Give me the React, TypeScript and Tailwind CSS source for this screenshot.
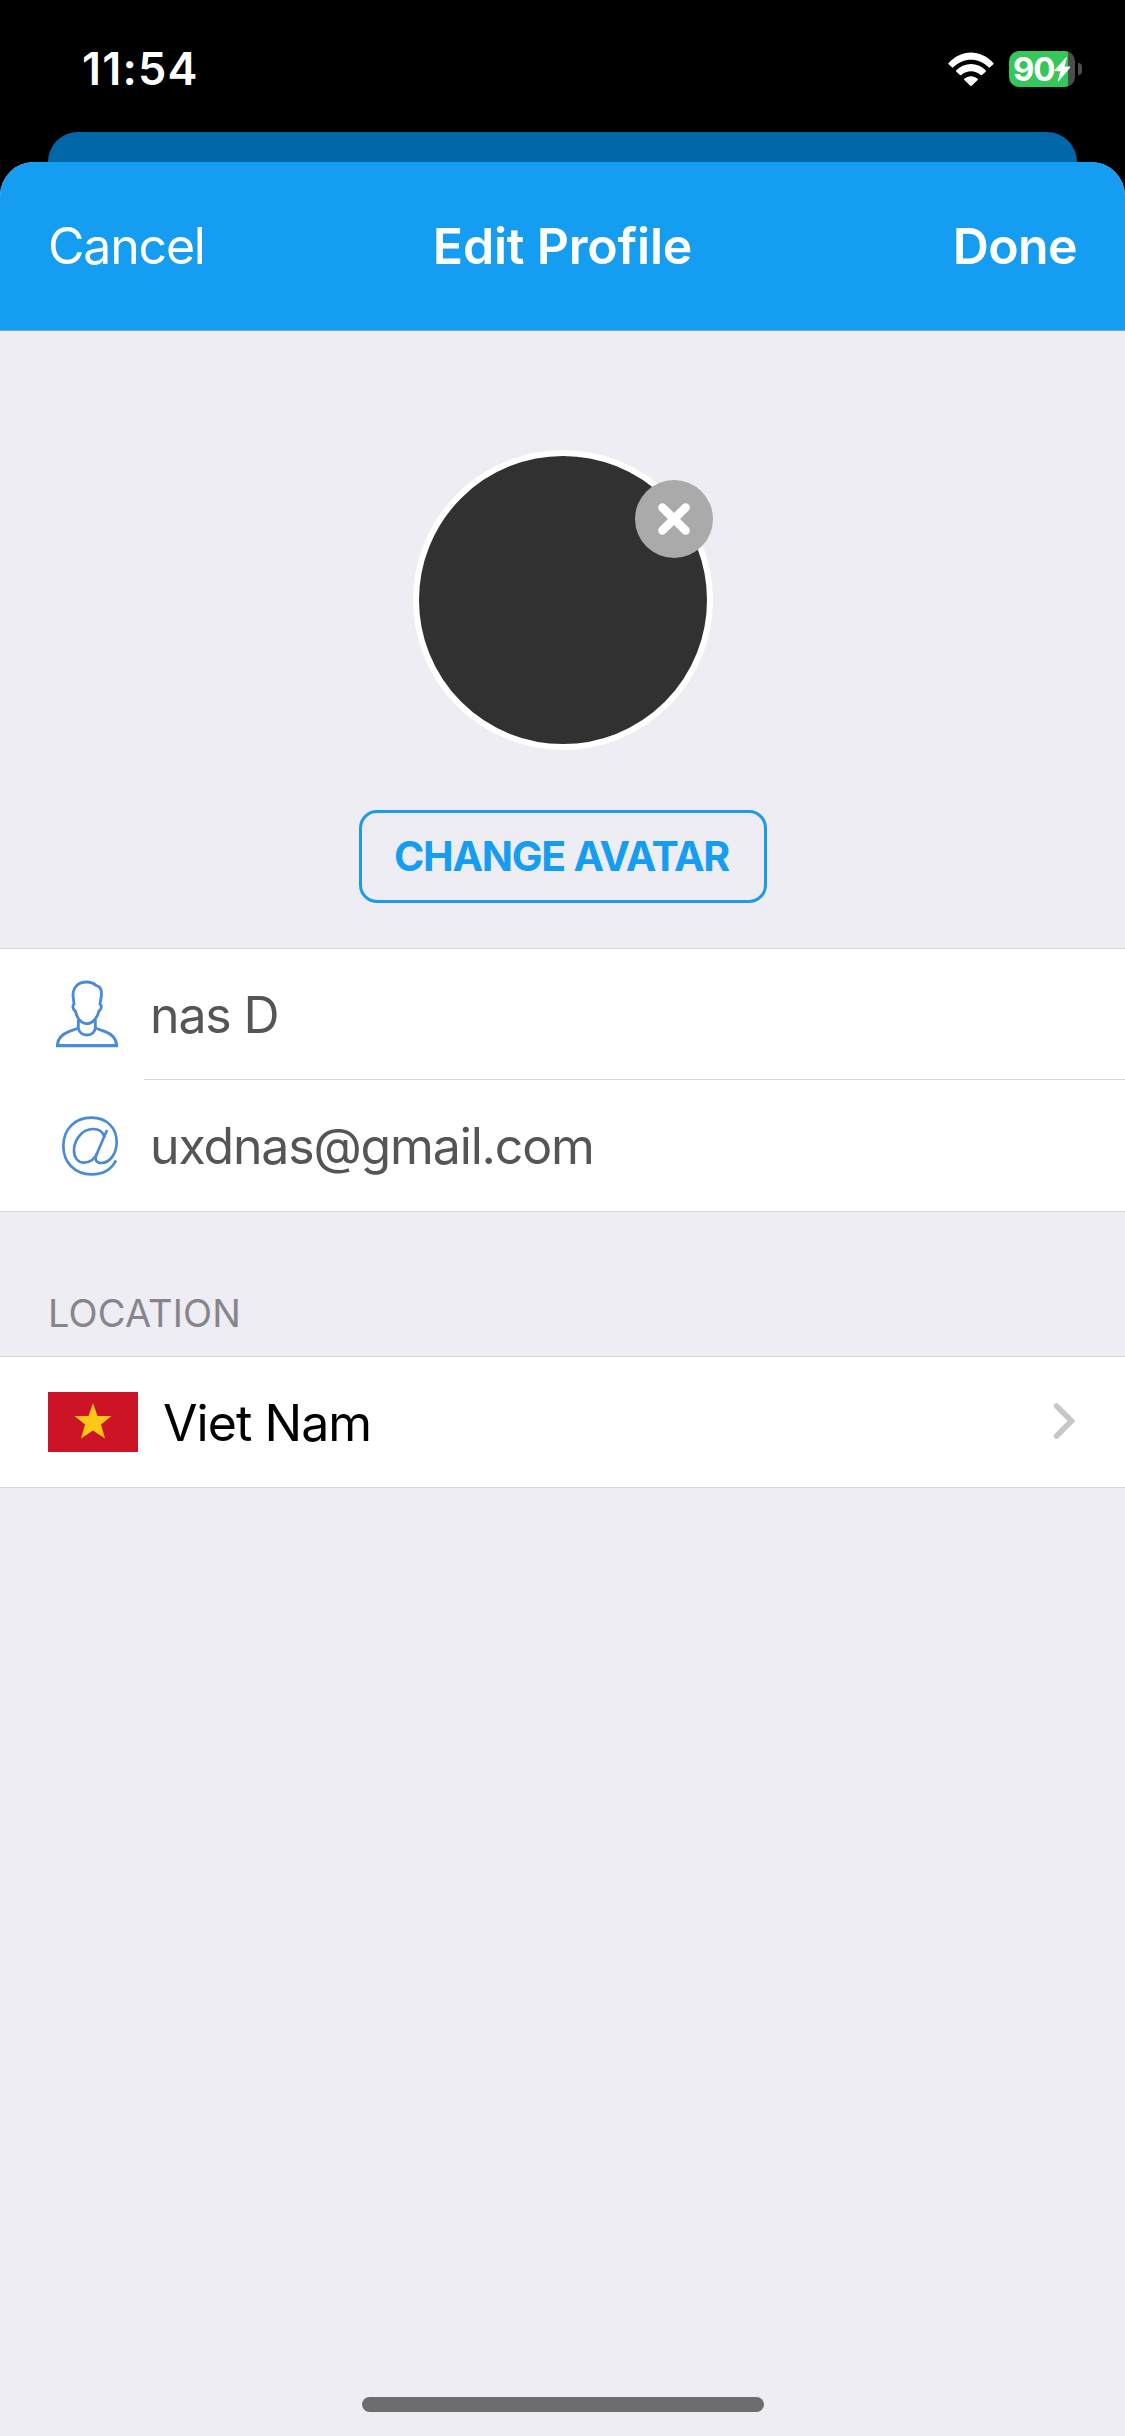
/**
 * App.tsx: "Edit Profile" sheet
 *
 * A modal card stacked over a dimmed parent card: status bar, blue navigation
 * bar, avatar editor, name and email rows, location row, home indicator.
 */
import type { ReactNode } from "react";

// ─── Icons ───────────────────────────────────────────────────────────────────

function WifiIcon() {
  return (
    <svg aria-hidden viewBox="0 0 138 102" className="h-[34px] w-[46px] fill-white">
      <path d="M2 33C40 -9 98 -9 136 33Q138 35 136 37L126 46Q124 48 122 46C92 16 46 16 16 46Q14 48 12 46L2 37Q0 35 2 33Z" />
      <path d="M25 55C50 30 88 30 113 55Q115 57 113 59L102 69Q100 71 98 69C81 54 57 54 40 69Q38 71 36 69L25 59Q23 57 25 55Z" />
      <path d="M49 80C61 70 77 70 89 80Q91 82 89 84L71 101Q69 103 67 101L49 84Q47 82 49 80Z" />
    </svg>
  );
}

function BoltIcon() {
  return (
    <svg aria-hidden viewBox="0 0 50 76" className="h-[25px] w-[17px] shrink-0 fill-white">
      <path d="M36 1Q39 0 38 4L31 29H47Q50 30 48 33L14 73Q10 76 11 71L19 43H3Q0 42 2 39Z" />
    </svg>
  );
}

function PersonIcon() {
  return (
    <svg aria-hidden viewBox="0 0 186 204" className="mb-0.5 h-[68px] w-[62px] fill-none stroke-[#4a8ad8]" strokeWidth="8.5">
      <path d="M92 6C66 6 51 22 51 46L54 72C48 76 51 90 58 93C62 112 74 131 92 131C111 131 124 112 129 93C137 88 138 76 132 72L136 48C138 30 134 19 120 16C112 9 104 6 92 6Z" />
      <path d="M67 119V140C67 147 50 150 38 155C18 163 5 174 4 196H182C181 174 168 163 148 155C136 150 118 147 118 140V119" />
      <path d="M67 143C68 156 78 165 93 165C108 165 117 156 118 143" />
      <path d="M0 197H186" strokeWidth="10" />
    </svg>
  );
}

function AtIcon() {
  return (
    <svg aria-hidden viewBox="0 0 168 180" className="h-[60px] w-[56px] fill-none stroke-[#4a8ad8]" strokeWidth="8">
      <path d="M162 133C148 161 120 175 88 175C38 175 4 139 4 90C4 40 38 5 88 5C135 5 164 36 164 78C164 112 145 140 118 141C101 141 98 130 103 117L135 42" />
      <path d="M128 64C123 47 111 39 93 39C60 39 36 72 36 103C36 127 49 140 66 140C84 140 98 129 106 110" />
    </svg>
  );
}

function VietnamFlag() {
  return (
    <svg aria-hidden viewBox="0 0 90 60" className="h-[60px] w-[90px]">
      <rect width="90" height="60" fill="#cd1326" />
      <path d="M45 11L49.5 24H63.5L53 32.6L57 46.5L45 38.5L33 46.5L37 32.6L26.5 24H40.5Z" fill="#ffc815" />
    </svg>
  );
}

// ─── Status bar ──────────────────────────────────────────────────────────────

function StatusBar() {
  return (
    <div className="flex h-[132px] shrink-0 justify-between pt-[51px] pr-[43px] pl-[82px] text-white">
      <span className="h-9 text-[45px] leading-9 font-semibold tracking-[1.2px]">11:54</span>
      <div className="flex h-9 items-center">
        <WifiIcon />
        <div className="ml-[15px] flex h-9 w-[66px] items-center rounded-[10px] bg-[linear-gradient(to_right,#34c759_59px,#4d4d4d_59px)] pl-[4px]">
          <span className="text-[33px] leading-9 font-bold tracking-[-1.2px]">90</span>
          <BoltIcon />
        </div>
        <div className="ml-[3px] h-3 w-1 rounded-r-full bg-[#4d4d4d]" />
      </div>
    </div>
  );
}

// ─── Sheet ───────────────────────────────────────────────────────────────────

function NavBar() {
  return (
    <header className="grid h-[169px] shrink-0 grid-cols-3 items-center border-b border-[#7ba6c9] bg-[#159df2] px-12 text-[50px] leading-[60px] text-white">
      <button className="justify-self-start tracking-[-1.2px]">Cancel</button>
      <h1 className="justify-self-center font-semibold whitespace-nowrap tracking-[-0.2px]">Edit Profile</h1>
      <button className="justify-self-end font-semibold tracking-[-0.6px]">Done</button>
    </header>
  );
}

function AvatarEditor() {
  return (
    <section className="flex h-[617px] shrink-0 flex-col items-center pt-[119px]">
      <div className="relative size-[300px] rounded-full border-[6px] border-white bg-[#313131]">
        <button
          aria-label="Remove avatar"
          className="absolute top-6 -right-1.5 flex size-[78px] items-center justify-center rounded-full bg-[#aaaaaa]"
        >
          <svg aria-hidden viewBox="0 0 32 32" className="size-8 stroke-white" strokeWidth="8.5" strokeLinecap="round">
            <path d="M4.4 4.4L27.6 27.6M27.6 4.4L4.4 27.6" />
          </svg>
        </button>
      </div>
      <button className="mt-[60px] h-[93px] w-[408px] rounded-[18px] border-[3px] border-[#1f9be6] pr-0.5 pb-0.5 text-[41px] leading-[50px] font-bold tracking-[-1.25px] whitespace-nowrap text-[#159df2]">
        CHANGE AVATAR
      </button>
    </section>
  );
}

function FieldRow({ icon, children }: { icon: ReactNode; children: ReactNode }) {
  return (
    <div className="flex h-[131px] items-center">
      <div className="flex w-[118px] justify-end">{icon}</div>
      <span className="mt-px ml-8 text-[50px] leading-[60px] tracking-[-1.15px] text-[#555555]">{children}</span>
    </div>
  );
}

export default function App() {
  return (
    <div className="flex h-[2436px] w-full flex-col overflow-hidden bg-black font-['Inter',sans-serif]">
      <StatusBar />
      {/* edge of the parent card, dimmed behind the sheet */}
      <div className="mx-12 h-[30px] shrink-0 rounded-t-[30px] bg-[#0068a8]" />

      <main className="flex grow flex-col overflow-hidden rounded-t-[34px] bg-[#eeedf4]">
        <NavBar />
        <AvatarEditor />

        <section className="border-y border-[#d9d9dc] bg-white">
          <FieldRow icon={<PersonIcon />}>nas D</FieldRow>
          {/* hairline overlaps the first row, so both rows share one pitch */}
          <div className="-mt-px ml-36 h-px bg-[#d9d9dc]" />
          <FieldRow icon={<AtIcon />}>uxdnas@gmail.com</FieldRow>
        </section>

        <h2 className="flex h-[144px] items-end pb-[21px] pl-12 text-[38px] leading-[44px] tracking-[0.15px] text-[#85858b]">
          LOCATION
        </h2>

        <button className="flex h-[132px] items-center border-y border-[#d9d9dc] bg-white pr-[50px] pl-12 text-left">
          <VietnamFlag />
          <span className="mt-0.5 ml-[25px] text-[50px] leading-[60px] tracking-[-0.95px] text-black">Viet Nam</span>
          <svg
            aria-hidden
            viewBox="0 0 22 38"
            className="mb-0.5 ml-auto h-[38px] w-[22px] fill-none stroke-[#c7c7c7]"
            strokeWidth="5.5"
            strokeLinecap="round"
          >
            <path d="M3.5 4L18.5 19L3.5 34" />
          </svg>
        </button>

        <div className="mx-auto mt-auto mb-6 h-[15px] w-[402px] rounded-full bg-[#6d6d6f]" />
      </main>
    </div>
  );
}
